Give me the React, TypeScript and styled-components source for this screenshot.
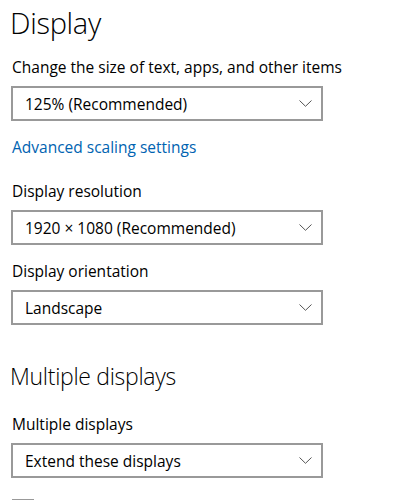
import React from 'react';
import styled, { createGlobalStyle } from 'styled-components';

const GlobalStyle = createGlobalStyle`
    html, body {
        margin: 0;
        padding: 0;
        background: #fff;
    }
    body {
        font-family: 'Open Sans', 'Noto Sans', sans-serif;
        color: #000;
    }
`;

const Page = styled.main`
    display: flex;
    flex-direction: column;
    align-items: flex-start;
    padding: 4px 0 0 11px;
`;

const Title = styled.h1<{ $size: number; $top?: number }>`
    margin: ${p => p.$top ?? 0}px 0 0 -1px;
    font-size: ${p => p.$size}px;
    line-height: ${p => Math.round(p.$size * 1.28)}px;
    font-weight: 300;
    letter-spacing: -0.3px;
    white-space: nowrap;
`;

const Field = styled.section<{ $top: number }>`
    display: flex;
    flex-direction: column;
    gap: 9px;
    margin-top: ${p => p.$top}px;
`;

const Label = styled.label`
    font-size: 15.5px;
    line-height: 20px;
    padding-left: 1px;
    white-space: nowrap;
`;

const Select = styled.div`
    box-sizing: border-box;
    display: flex;
    align-items: center;
    justify-content: space-between;
    width: 312px;
    height: 35px;
    padding: 0 9px 0 12px;
    border: 2px solid #999;
    background: #fff;
    font-size: 15.5px;
    cursor: pointer;
`;

const Link = styled.a`
    margin-top: 16px;
    padding-left: 1px;
    font-size: 15.5px;
    line-height: 20px;
    color: #0063b1;
    text-decoration: none;
    cursor: pointer;
`;

const Box = styled.span`
    box-sizing: border-box;
    display: block;
    width: 22px;
    height: 22px;
    margin: 21px 0 0 1px;
    border: 2px solid #999;
`;

function Chevron() {
    return (
        <svg width="13" height="7" viewBox="0 0 13 7" fill="none">
            <polyline points="0.5,0.5 6.5,6.3 12.5,0.5" stroke="#555" strokeWidth="1" />
        </svg>
    );
}

function Dropdown({ label, value, top }: { label: string; value: string; top: number }) {
    return (
        <Field $top={top}>
            <Label>{label}</Label>
            <Select>
                <span>{value}</span>
                <Chevron />
            </Select>
        </Field>
    );
}

export default function App() {
    return (
        <>
            <GlobalStyle />
            <Page>
                <Title $size={29}>Display</Title>
                <Dropdown top={16} label="Change the size of text, apps, and other items" value="125% (Recommended)" />
                <Link>Advanced scaling settings</Link>
                <Dropdown top={24} label="Display resolution" value="1920 × 1080 (Recommended)" />
                <Dropdown top={16} label="Display orientation" value="Landscape" />
                <Title $size={23} $top={37}>Multiple displays</Title>
                <Dropdown top={23} label="Multiple displays" value="Extend these displays" />
                <Box role="checkbox" aria-checked="false" />
            </Page>
        </>
    );
}
